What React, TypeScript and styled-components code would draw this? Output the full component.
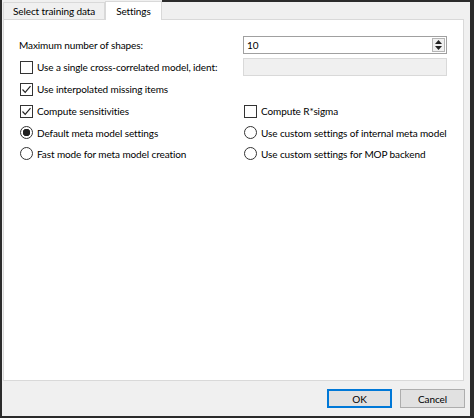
import { createGlobalStyle, styled } from "styled-components";

const GlobalStyle = createGlobalStyle`
  html, body {
    margin: 0;
    padding: 0;
    background: #2b2b2b;
  }
  body {
    font-family: Lato, "Noto Sans", "Liberation Sans", sans-serif;
    font-size: 10px;
    letter-spacing: -0.1px;
    color: #000;
  }
`;

const Check = ({ checked }: { checked?: boolean }) => (
  <Box>
    {checked && (
      <svg width="11" height="11" viewBox="0 0 11 11">
        <path d="M1.5 5.5 L4.2 8.3 L9.5 2.2" fill="none" stroke="#222" strokeWidth="1.2" />
      </svg>
    )}
  </Box>
);

const Radio = ({ checked }: { checked?: boolean }) => <Circle $checked={checked} />;

const App = () => {
  return (
    <>
      <GlobalStyle />
      <Frame>
        <TabBar>
          <Tab>Select training data</Tab>
          <Tab $active>Settings</Tab>
          <TabFill />
        </TabBar>
        <Panel>
          <Form>
            <Label>Maximum number of shapes:</Label>
            <SpinBox>
              <SpinValue>10</SpinValue>
              <SpinButtons>
                <svg width="7" height="4" viewBox="0 0 7 4">
                  <path d="M0 4 L3.5 0 L7 4 Z" fill="#222" />
                </svg>
                <svg width="7" height="4" viewBox="0 0 7 4">
                  <path d="M0 0 L3.5 4 L7 0 Z" fill="#222" />
                </svg>
              </SpinButtons>
            </SpinBox>

            <Option>
              <Check />
              Use a single cross-correlated model, ident:
            </Option>
            <TextField />

            <Option>
              <Check checked />
              Use interpolated missing items
            </Option>
            <span />

            <Option>
              <Check checked />
              Compute sensitivities
            </Option>
            <Option>
              <Check />
              Compute R*sigma
            </Option>

            <Option>
              <Radio checked />
              Default meta model settings
            </Option>
            <Option>
              <Radio />
              Use custom settings of internal meta model
            </Option>

            <Option>
              <Radio />
              Fast mode for meta model creation
            </Option>
            <Option>
              <Radio />
              Use custom settings for MOP backend
            </Option>
          </Form>
        </Panel>
        <Footer>
          <Button $default>OK</Button>
          <Button>Cancel</Button>
        </Footer>
      </Frame>
    </>
  );
};

export default App;

const Frame = styled.div`
  width: 468px;
  height: 416px;
  margin-left: 2px;
  background: #f0f0f0;
  display: flex;
  flex-direction: column;
`;

const TabBar = styled.div`
  display: flex;
  align-items: flex-end;
  height: 19px;
  padding-left: 1px;
  background: #f0f0f0;
`;

const Tab = styled.div<{ $active?: boolean }>`
  box-sizing: border-box;
  height: ${(p) => (p.$active ? "19px" : "17px")};
  padding: 0 ${(p) => (p.$active ? "10px" : "9px")};
  display: flex;
  align-items: center;
  border: 1px solid #d9d9d9;
  border-bottom: none;
  background: ${(p) => (p.$active ? "#fff" : "#f0f0f0")};
  position: relative;
  top: ${(p) => (p.$active ? "1px" : "0")};
  z-index: ${(p) => (p.$active ? 1 : 0)};
`;

const TabFill = styled.div`
  flex: 1;
  align-self: stretch;
  border-top: 2px solid #2b2b2b;
`;

const Panel = styled.div`
  flex: 1;
  margin: 0 6px 0 1px;
  background: #fff;
  border: 1px solid #d9d9d9;
`;

const Form = styled.div`
  display: grid;
  grid-template-columns: 224px 204px;
  grid-template-rows: 22px 22px 22px 22px 21px 21px;
  align-items: center;
  padding: 14px 0 0 15px;
`;

const Label = styled.div`
  white-space: nowrap;
`;

const Option = styled.label`
  display: flex;
  align-items: center;
  gap: 4px;
  white-space: nowrap;
`;

const Box = styled.span`
  box-sizing: border-box;
  flex-shrink: 0;
  width: 13px;
  height: 13px;
  border: 1px solid #333;
  background: #fff;
  display: flex;
  align-items: center;
  justify-content: center;
  margin-left: 1px;
`;

const Circle = styled.span<{ $checked?: boolean }>`
  box-sizing: border-box;
  flex-shrink: 0;
  width: 13px;
  height: 13px;
  border: 1px solid #333;
  border-radius: 50%;
  background: ${(p) => (p.$checked ? "radial-gradient(circle, #222 0 3.5px, #fff 4px)" : "#fff")};
  margin-left: 1px;
`;

const SpinBox = styled.div`
  box-sizing: border-box;
  height: 18px;
  display: flex;
  align-items: stretch;
  border: 1px solid #a0a0a0;
  background: #fff;
`;

const SpinValue = styled.div`
  flex: 1;
  display: flex;
  align-items: center;
  padding-left: 3px;
`;

const SpinButtons = styled.div`
  box-sizing: border-box;
  width: 13px;
  margin: 1px;
  border: 1px solid #b5b5b5;
  background: #f0f0f0;
  display: flex;
  flex-direction: column;
  align-items: center;
  justify-content: space-evenly;
`;

const TextField = styled.div`
  box-sizing: border-box;
  height: 18px;
  border: 1px solid #d9d9d9;
  background: #f0f0f0;
`;

const Footer = styled.div`
  height: 35px;
  display: flex;
  align-items: center;
  justify-content: flex-end;
  gap: 8px;
  padding-right: 5px;
`;

const Button = styled.div<{ $default?: boolean }>`
  box-sizing: border-box;
  width: 65px;
  height: 19px;
  display: flex;
  align-items: center;
  justify-content: center;
  background: #e1e1e1;
  border: ${(p) => (p.$default ? "2px solid #0078d7" : "1px solid #adadad")};
`;
